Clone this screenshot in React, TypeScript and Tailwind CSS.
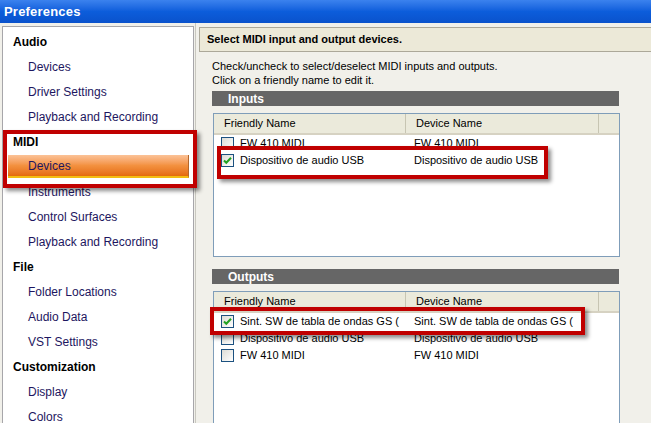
import React from 'react';

type NavItem = { label: string; heading?: boolean; selected?: boolean };

const nav: NavItem[] = [
  { label: 'Audio', heading: true },
  { label: 'Devices' },
  { label: 'Driver Settings' },
  { label: 'Playback and Recording' },
  { label: 'MIDI', heading: true },
  { label: 'Devices', selected: true },
  { label: 'Instruments' },
  { label: 'Control Surfaces' },
  { label: 'Playback and Recording' },
  { label: 'File', heading: true },
  { label: 'Folder Locations' },
  { label: 'Audio Data' },
  { label: 'VST Settings' },
  { label: 'Customization', heading: true },
  { label: 'Display' },
  { label: 'Colors' },
];

type Row = { name: string; device: string; checked: boolean };

const inputs: Row[] = [
  { name: 'FW 410 MIDI', device: 'FW 410 MIDI', checked: false },
  { name: 'Dispositivo de audio USB', device: 'Dispositivo de audio USB', checked: true },
];

const outputs: Row[] = [
  { name: 'Sint. SW de tabla de ondas GS (', device: 'Sint. SW de tabla de ondas GS (', checked: true },
  { name: 'Dispositivo de audio USB', device: 'Dispositivo de audio USB', checked: false },
  { name: 'FW 410 MIDI', device: 'FW 410 MIDI', checked: false },
];

function CheckBox({ checked }: { checked: boolean }) {
  return (
    <span className="w-[13px] h-[13px] border border-[#1c5180] bg-linear-to-br from-[#dcdcd6] to-white flex items-center justify-center shrink-0">
      {checked && (
        <svg width="9" height="9" viewBox="0 0 9 9">
          <path d="M1 4.5 L3.3 6.8 L8 1.8" stroke="#21a121" strokeWidth="2" fill="none" />
        </svg>
      )}
    </span>
  );
}

function DeviceList({ rows, className }: { rows: Row[]; className: string }) {
  return (
    <div className={`ml-[14px] w-[407px] border border-[#7f9db9] bg-white ${className}`}>
      <div className="h-[21px] bg-[#ebeadb] border-b-2 border-[#d6d2c2] flex items-center text-[11px] text-black">
        <div className="w-[192px] pl-[10px] h-full flex items-center border-r border-[#c7c5b2]">Friendly Name</div>
        <div className="w-[193px] pl-[10px] h-full flex items-center border-r border-[#c7c5b2]">Device Name</div>
      </div>
      {rows.map((r, i) => (
        <div key={i} className="h-[17px] flex items-center text-[11px] text-black">
          <div className="w-[192px] pl-[7px] flex items-center gap-[6px]">
            <CheckBox checked={r.checked} />
            <span className="whitespace-nowrap">{r.name}</span>
          </div>
          <div className="pl-[8px] whitespace-nowrap">{r.device}</div>
        </div>
      ))}
    </div>
  );
}

export default function App() {
  return (
    <div className="relative w-[651px] h-[423px] overflow-hidden bg-[#f1f0ea] flex flex-col font-['Liberation_Sans',Arial,sans-serif]">
      {/* title bar */}
      <div className="h-[23px] shrink-0 bg-linear-to-b from-[#3b82ee] via-[#0c5ddb] to-[#0a52cc] flex items-center pl-[4px]">
        <span className="text-white font-bold text-[13px] tracking-[0.2px]">Preferences</span>
      </div>

      <div className="flex flex-1 min-h-0">
        {/* left tree */}
        <div className="ml-[2px] mt-[3px] w-[192px] bg-white border border-[#a7a6aa] border-b-0 pt-[2px] shrink-0">
          {nav.map((n, i) =>
            n.heading ? (
              <div key={i} className="h-[25px] flex items-center pl-[10px] text-[12px] font-bold text-black">
                {n.label}
              </div>
            ) : n.selected ? (
              <div key={i} className="h-[25px] flex items-center">
                <div className="ml-[5px] w-[181px] h-[23px] flex items-center pl-[20px] text-[12px] text-[#1d1660] bg-linear-to-b from-[#fbc297] via-[#f3913f] to-[#e46a08] border-b-2 border-[#f3bd12] border-r border-r-[#b5662a]">
                  {n.label}
                </div>
              </div>
            ) : (
              <div key={i} className="h-[25px] flex items-center pl-[25px] text-[12px] text-[#1d1660]">
                {n.label}
              </div>
            )
          )}
        </div>

        {/* splitter */}
        <div className="w-[2px] ml-[1px] border-l border-[#c9c8c0] shrink-0" />

        {/* right content */}
        <div className="flex-1 pt-[4px] pl-[2px] min-w-0">
          <div className="h-[25px] bg-[#ece9d8] border border-[#aca899] border-r-0 flex items-center pl-[7px] text-[11px] font-bold text-black whitespace-nowrap">
            Select MIDI input and output devices.
          </div>
          <div className="mt-[7px] pl-[13px] text-[11px] leading-[14px] text-black">
            <div>Check/uncheck to select/deselect MIDI inputs and outputs.</div>
            <div>Click on a friendly name to edit it.</div>
          </div>

          <div className="mt-[4px] ml-[13px] w-[407px] h-[15px] bg-[#666666] flex items-center pl-[16px] text-white text-[12px] font-bold">
            Inputs
          </div>
          <DeviceList rows={inputs} className="mt-[7px] h-[144px]" />

          <div className="mt-[12px] ml-[13px] w-[407px] h-[15px] bg-[#666666] flex items-center pl-[16px] text-white text-[12px] font-bold">
            Outputs
          </div>
          <DeviceList rows={outputs} className="mt-[7px] h-[200px]" />
        </div>
      </div>

      {/* highlight boxes */}
      <div className="absolute left-[3px] top-[130px] w-[194px] h-[58px] border-4 border-[#c00000] shadow-[3px_3px_4px_rgba(0,0,0,0.45)]" />
      <div className="absolute left-[217px] top-[146px] w-[331px] h-[33px] border-4 border-[#c00000] shadow-[3px_3px_4px_rgba(0,0,0,0.45)]" />
      <div className="absolute left-[210px] top-[307px] w-[375px] h-[28px] border-4 border-[#c00000] shadow-[3px_3px_4px_rgba(0,0,0,0.45)]" />
    </div>
  );
}
